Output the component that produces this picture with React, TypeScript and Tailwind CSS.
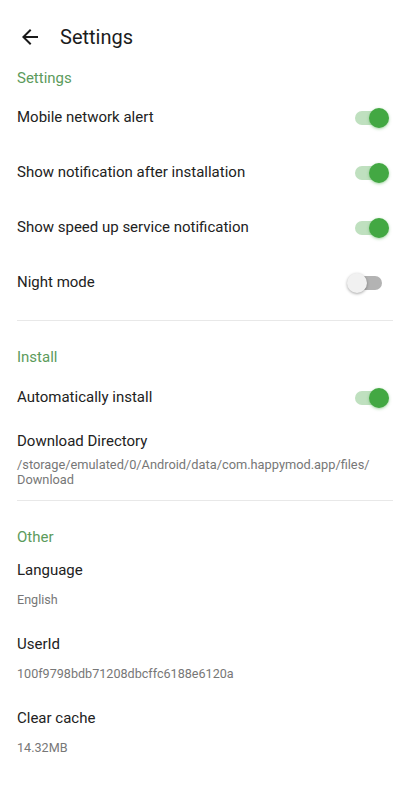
import React from 'react'

function Toggle({ on }: { on: boolean }) {
  return (
    <div className="relative w-[44px] h-[22px] flex items-center">
      <div
        className={`ml-[10px] w-[27px] h-[14px] rounded-full ${on ? 'bg-[#bfe0bf]' : 'bg-[#b3b3b3]'}`}
      />
      <div
        className={`absolute top-px w-[20px] h-[20px] rounded-full ${
          on
            ? 'left-[24px] bg-[#43a843] shadow-[0_1px_3px_rgba(67,168,67,0.5)]'
            : 'left-[2px] bg-[#f1f1f1] shadow-[0_1px_3px_rgba(0,0,0,0.35)]'
        }`}
      />
    </div>
  )
}

function SwitchRow({ label, on, className = '' }: { label: string; on: boolean; className?: string }) {
  return (
    <div className={`h-[55px] flex items-center justify-between ${className}`}>
      <span className="text-[15px] text-[#222]">{label}</span>
      <div className="mr-[4px]">
        <Toggle on={on} />
      </div>
    </div>
  )
}

function InfoRow({ title, value }: { title: string; value: string }) {
  return (
    <div className="mt-[25px] first:mt-[13px]">
      <p className="text-[15px] leading-[20px] text-[#222]">{title}</p>
      <p className="mt-[11px] text-[12.6px] leading-[18px] text-[#777]">{value}</p>
    </div>
  )
}

export default function App() {
  return (
    <div className="w-[410px] h-[800px] bg-white font-['Roboto',sans-serif] px-[17px]">
      {/* Header */}
      <div className="pt-[24px] h-[50px] flex items-center">
        <svg width="24" height="24" viewBox="0 0 24 24" className="ml-px" fill="#1a1a1a">
          <path d="M20 11H7.83l5.59-5.59L12 4l-8 8 8 8 1.41-1.41L7.83 13H20v-2z" />
        </svg>
        <span className="ml-[18px] text-[20px] leading-[26px] text-[#1c1c1c]">Settings</span>
      </div>

      {/* Settings */}
      <p className="mt-[18px] text-[15px] leading-[20px] text-[#5c9b5c]">Settings</p>
      <div className="mt-[2px]">
        <SwitchRow label="Mobile network alert" on />
        <SwitchRow label="Show notification after installation" on />
        <SwitchRow label="Show speed up service notification" on />
        <SwitchRow label="Night mode" on={false} />
      </div>
      <div className="mt-[10px] h-px bg-[#e8e8e8]" />

      {/* Install */}
      <p className="mt-[26px] text-[15px] leading-[20px] text-[#5c9b5c]">Install</p>
      <SwitchRow label="Automatically install" on className="mt-[3px]" />
      <p className="mt-[6px] text-[15px] leading-[20px] text-[#222]">Download Directory</p>
      <p className="mt-[6px] text-[12.8px] leading-[15px] text-[#777]">
        /storage/emulated/0/Android/data/com.happymod.app/files/
        <br />
        Download
      </p>
      <div className="mt-[13px] h-px bg-[#e8e8e8]" />

      {/* Other */}
      <p className="mt-[26px] text-[15px] leading-[20px] text-[#5c9b5c]">Other</p>
      <div>
        <InfoRow title="Language" value="English" />
        <InfoRow title="UserId" value="100f9798bdb71208dbcffc6188e6120a" />
        <InfoRow title="Clear cache" value="14.32MB" />
      </div>
    </div>
  )
}
